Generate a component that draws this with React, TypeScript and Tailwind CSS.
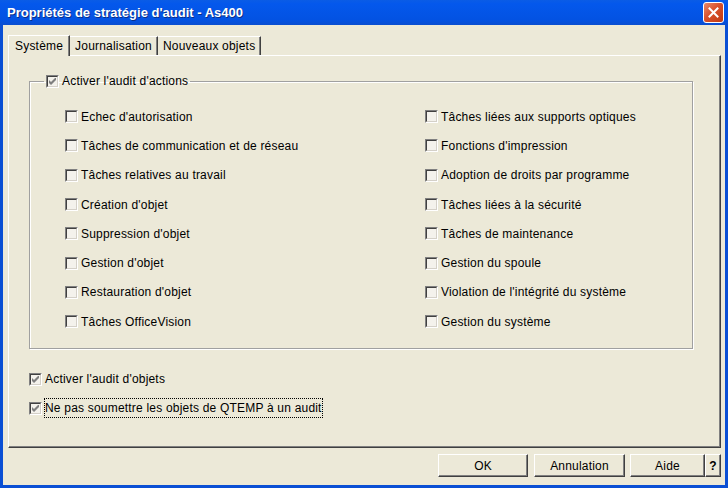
import React from 'react';

const leftItems = [
  "Echec d'autorisation",
  'Tâches de communication et de réseau',
  'Tâches relatives au travail',
  "Création d'objet",
  "Suppression d'objet",
  "Gestion d'objet",
  "Restauration d'objet",
  'Tâches OfficeVision',
];

const rightItems = [
  'Tâches liées aux supports optiques',
  "Fonctions d'impression",
  'Adoption de droits par programme',
  'Tâches liées à la sécurité',
  'Tâches de maintenance',
  'Gestion du spoule',
  "Violation de l'intégrité du système",
  'Gestion du système',
];

function CheckBox({ checked }: { checked?: boolean }) {
  return (
    <span className="relative flex h-[13px] w-[13px] shrink-0 border border-t-[#808080] border-l-[#808080] border-b-white border-r-white">
      <span className="flex h-full w-full items-center justify-center border border-t-[#404040] border-l-[#404040] border-b-[#d4d0c8] border-r-[#d4d0c8] bg-[#f4f2ec]">
        {checked && (
          <svg width="7" height="7" viewBox="0 0 7 7">
            <path d="M0 2v3l2 2 5-5V-1L2 4z" fill="#7f7f7f" />
          </svg>
        )}
      </span>
    </span>
  );
}

function Row({ label, checked }: { label: string; checked?: boolean }) {
  return (
    <div className="flex items-center gap-[3px]">
      <CheckBox checked={checked} />
      <span>{label}</span>
    </div>
  );
}

function Button({ children, className = '' }: { children: React.ReactNode; className?: string }) {
  return (
    <button
      className={
        'flex h-[23px] items-center justify-center border border-t-white border-l-white border-b-[#404040] border-r-[#404040] bg-[#ece9d8] shadow-[inset_-1px_-1px_0_#808080] text-black ' +
        className
      }
    >
      {children}
    </button>
  );
}

export default function App() {
  return (
    <div className="flex h-[488px] w-[728px] flex-col overflow-hidden bg-[#0a4fd4] text-[12px] tracking-[0.2px] text-black [font-family:'Liberation_Sans',Arial,sans-serif]">
      {/* title bar */}
      <div className="flex h-[25px] shrink-0 items-center justify-between bg-[linear-gradient(to_bottom,#0a5ce6,#0458ec_15%,#0352e2_80%,#0a4ed0)] pl-[7px] pr-[4px]">
        <span className="text-[13px] font-bold tracking-normal text-white [text-shadow:1px_1px_0_#0a2f8a]">
          Propriétés de stratégie d'audit - As400
        </span>
        <div className="flex h-[21px] w-[21px] items-center justify-center rounded-[3px] border border-white bg-[linear-gradient(135deg,#e88a6c,#d8512c_45%,#c03a12)]">
          <svg width="11" height="11" viewBox="0 0 11 11">
            <path d="M1.5 1.5l8 8M9.5 1.5l-8 8" stroke="white" strokeWidth="2" strokeLinecap="square" />
          </svg>
        </div>
      </div>

      {/* body */}
      <div className="mx-[3px] mb-[3px] flex flex-1 flex-col bg-[#ece9d8] pl-[5px] pr-[4px] pt-[8px]">
        {/* tabs */}
        <div className="relative z-10 flex h-[22px] items-end">
          <div className="-mb-px flex h-[21px] items-center border border-b-0 border-t-white border-l-white border-r-[#404040] bg-[#ece9d8] px-[6px] shadow-[inset_-1px_0_0_#808080]">
            Système
          </div>
          <div className="flex h-[19px] items-center border border-b-0 border-l-0 border-t-white border-r-[#404040] px-[5px] shadow-[inset_-1px_0_0_#808080]">
            Journalisation
          </div>
          <div className="flex h-[19px] items-center border border-b-0 border-l-0 border-t-white border-r-[#404040] px-[5px] shadow-[inset_-1px_0_0_#808080]">
            Nouveaux objets
          </div>
        </div>

        {/* tab panel */}
        <div className="flex h-[393px] flex-col border border-t-white border-l-white border-b-[#404040] border-r-[#404040] shadow-[inset_-1px_-1px_0_#808080] px-[20px] pt-[19px]">
          <fieldset className="-mt-[3px] mr-[7px] h-[277px] border border-[#a0a0a0] shadow-[inset_1px_1px_0_white,1px_1px_0_white]">
            <legend className="ml-[14px] px-[2px]">
              <Row label="Activer l'audit d'actions" checked />
            </legend>
            <div className="grid grid-cols-[360px_1fr] pl-[35px] pt-[12px]">
              <div className="flex flex-col">
                {leftItems.map((l) => (
                  <div key={l} className="flex h-[29.3px] items-center">
                    <Row label={l} />
                  </div>
                ))}
              </div>
              <div className="flex flex-col">
                {rightItems.map((l) => (
                  <div key={l} className="flex h-[29.3px] items-center">
                    <Row label={l} />
                  </div>
                ))}
              </div>
            </div>
          </fieldset>

          <div className="mt-[21px] flex flex-col gap-[11px]">
            <Row label="Activer l'audit d'objets" checked />
            <div className="flex items-center gap-[3px]">
              <CheckBox checked />
              <span className="outline outline-1 outline-dotted outline-black">
                Ne pas soumettre les objets de QTEMP à un audit
              </span>
            </div>
          </div>
        </div>

        {/* buttons */}
        <div className="mt-[6px] flex justify-end">
          <Button className="w-[90px]">OK</Button>
          <Button className="ml-[6px] w-[91px]">Annulation</Button>
          <Button className="ml-[5px] w-[75px]">Aide</Button>
          <Button className="w-[16px] font-bold">?</Button>
        </div>
      </div>
    </div>
  );
}
